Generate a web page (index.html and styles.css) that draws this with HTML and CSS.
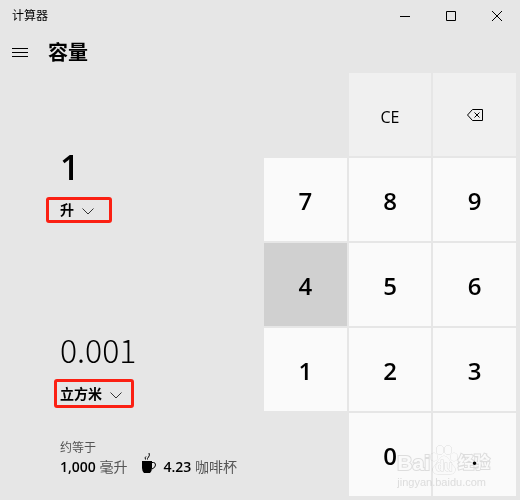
FILE: index.html
```html
<!DOCTYPE html>
<html lang="zh-CN">
<head>
  <meta charset="UTF-8">
  <meta name="viewport" content="width=device-width, initial-scale=1.0">
  <title>计算器</title>
  <link rel="stylesheet" href="styles.css">
</head>
<body>
  <div class="app">
    <header class="titlebar">
      <span class="app-name">计算器</span>
      <div class="window-controls">
        <button type="button" class="win-btn" aria-label="最小化">
          <svg width="10" height="10" viewBox="0 0 10 10"><path d="M0 5.5h10"/></svg>
        </button>
        <button type="button" class="win-btn" aria-label="最大化">
          <svg width="10" height="10" viewBox="0 0 10 10"><path d="M.5.5h9v9h-9z"/></svg>
        </button>
        <button type="button" class="win-btn" aria-label="关闭">
          <svg width="10" height="10" viewBox="0 0 10 10"><path d="M0 0l10 10M10 0L0 10"/></svg>
        </button>
      </div>
    </header>
    <div class="mode-bar">
      <button type="button" class="menu-btn" aria-label="菜单">
        <svg width="16" height="9" viewBox="0 0 16 9"><path d="M0 .5h16M0 4.5h16M0 8.5h16"/></svg>
      </button>
      <h1>容量</h1>
    </div>
    <main class="converter">
      <section class="panel">
        <div class="field">
          <output class="value active">1</output>
          <div class="unit unit-from">
            <select id="unitFrom" aria-label="输入单位">
              <option>升</option>
            </select>
            <svg class="chevron" width="12" height="7" viewBox="0 0 12 7"><path d="M.5.5L6 6l5.500-5.500"/></svg>
          </div>
        </div>
        <div class="field">
          <output class="value">0.001</output>
          <div class="unit unit-to">
            <select id="unitTo" aria-label="输出单位">
              <option>立方米</option>
            </select>
            <svg class="chevron" width="12" height="7" viewBox="0 0 12 7"><path d="M.5.5L6 6l5.500-5.500"/></svg>
          </div>
        </div>
        <div class="about">
          <p class="about-title">约等于</p>
          <div class="about-row">
            <span><b>1,000</b> 毫升</span>
            <span class="about-item">
              <svg class="cup" width="16" height="20" viewBox="0 0 16 20">
                <path d="M1 8h10v7q0 3-2 5H3q-2-2-2-5z"/>
                <path class="line" d="M11 9.500h1.500q2 0 2 2.500t-3.500 4M4.500 6.500q-1-2 .5-3M6.500 6.500q-.5-1 1-2.500t.5-4"/>
              </svg>
              <span><b>4.23</b> 咖啡杯</span>
            </span>
          </div>
        </div>
      </section>
      <section class="keypad">
        <button type="button" class="key key-fn key-ce">CE</button>
        <button type="button" class="key key-fn" aria-label="退格">
          <svg width="16" height="12" viewBox="0 0 16 12"><path d="M5.500.5h10v11h-10L.5 6zM7.500 3.500l5 5M12.500 3.500l-5 5"/></svg>
        </button>
        <button type="button" class="key key-start">7</button>
        <button type="button" class="key">8</button>
        <button type="button" class="key">9</button>
        <button type="button" class="key pressed">4</button>
        <button type="button" class="key">5</button>
        <button type="button" class="key">6</button>
        <button type="button" class="key">1</button>
        <button type="button" class="key">2</button>
        <button type="button" class="key">3</button>
        <button type="button" class="key key-zero">0</button>
        <button type="button" class="key">.</button>
        <div class="watermark">
          <div class="brand">
            <span class="brand-latin">Bai</span>
            <svg width="28" height="30" viewBox="0 0 28 30">
              <ellipse cx="4" cy="12" rx="3.500" ry="4"/>
              <ellipse cx="10" cy="5" rx="3.500" ry="4.500"/>
              <ellipse cx="18" cy="5" rx="3.500" ry="4.500"/>
              <ellipse cx="24" cy="12" rx="3.500" ry="4"/>
              <path d="M14 11q3 0 6 5t5 7q1 6-5 6H8q-6 0-5-6 2-2 5-7t6-5z"/>
              <text x="14" y="26" text-anchor="middle">du</text>
            </svg>
            <span class="brand-cn">经验</span>
          </div>
          <div class="site">jingyan.baidu.com</div>
        </div>
      </section>
    </main>
  </div>
</body>
</html>
```
FILE: styles.css
```css
* { box-sizing: border-box; margin: 0; padding: 0; }
body {
  font-family: "Open Sans", "Noto Sans CJK SC", sans-serif;
  background: #e6e6e6;
  color: #000;
  min-height: 100vh;
}
button, select { font: inherit; color: inherit; border: none; background: none; }
svg { display: block; fill: none; stroke: #000; }

/* Title bar */
.titlebar { display: flex; justify-content: space-between; height: 32px; }
.app-name { padding-left: 12px; font-size: 12px; line-height: 32px; }
.window-controls { display: flex; }
.win-btn { width: 46px; display: flex; align-items: center; justify-content: center; }

.mode-bar { display: flex; align-items: center; height: 41px; padding-left: 12px; gap: 20px; }
.mode-bar h1 { font-size: 20px; line-height: 28px; font-weight: 700; }

/* Converter */
.converter {
  display: grid;
  grid-template-columns: 22fr 21fr;
  align-items: start;
  padding-right: 4px;
}
.panel { padding: 72px 0 0 60px; }
.field { margin-bottom: 104px; }
.field + .field { margin-bottom: 31px; }
.value { display: block; font: 300 32px/44px "Noto Sans CJK SC", sans-serif; margin-bottom: 8px; }
.value.active { font: 600 34px/44px "Open Sans", sans-serif; }
.unit {
  position: relative;
  width: fit-content;
  border: 3px solid #fb2013;
  border-radius: 3px;
}
.unit select {
  display: block;
  height: 20px;
  appearance: none;
  font-size: 14px;
  line-height: 20px;
  font-weight: 700;
}
.unit-from { margin-left: -14px; }
.unit-from select { padding-left: 11px; padding-right: 35px; }
.unit-to { margin-left: -6px; }
.unit-to select { height: 23px; padding-left: 3px; padding-right: 29px; }
.chevron { position: absolute; top: 8px; right: 15px; stroke: #333; pointer-events: none; }
.unit-to .chevron { top: 10px; right: 9px; }

.about-title { font-size: 12px; line-height: 18px; color: #555; }
.about-row { display: flex; gap: 14px; font-size: 14px; line-height: 20px; color: #555; white-space: nowrap; }
.about-row b { color: #000; font-weight: 600; }
.about-item { display: flex; gap: 6px; }
.cup { margin-top: -4px; fill: #000; stroke: none; }
.cup .line { fill: none; stroke: #000; }

/* Keypad */
.keypad {
  position: relative;
  display: grid;
  grid-template-columns: repeat(3, 1fr);
  grid-auto-rows: 83px;
  gap: 2px;
}
.key {
  display: flex;
  align-items: center;
  justify-content: center;
  padding-top: 2px;
  background: #fafafa;
  font-size: 24px;
  font-weight: 600;
}
.key-fn { padding-top: 0; background: #f0f0f0; font-size: 16px; font-weight: 400; }
.key-ce { padding-top: 4px; }
.key-ce, .key-zero { grid-column: 2; }
.pressed { background: #d0d0d0; }

/* Site mark, blended so the keys under it stay readable */
.watermark {
  position: absolute;
  right: 26px;
  bottom: 7px;
  color: #fff;
  pointer-events: none;
  mix-blend-mode: multiply;
}
.brand {
  display: flex;
  align-items: flex-end;
  font-family: "Liberation Sans", "Noto Sans CJK SC", sans-serif;
  font-weight: 700;
  -webkit-text-stroke: 2px #e2e2e2;
  paint-order: stroke fill;
}
.brand-latin { font-size: 21px; line-height: 24px; }
.brand-cn { font-size: 16px; line-height: 24px; }
.brand svg { fill: #fff; stroke: #e2e2e2; }
.brand text { font-size: 14px; }
.site { font: 11px/14px "Liberation Sans", sans-serif; color: #e2e2e2; }
```
